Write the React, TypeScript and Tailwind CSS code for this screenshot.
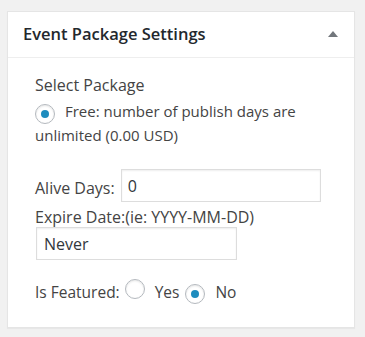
import React from "react";

const Radio = ({ checked }: { checked?: boolean }) => (
  <span className="inline-flex h-[20px] w-[20px] shrink-0 items-center justify-center rounded-full border border-[#b4b9be] bg-white shadow-[inset_0_1px_2px_rgba(0,0,0,0.1)]">
    {checked && <span className="h-[8px] w-[8px] rounded-full bg-[#1e8cbe]" />}
  </span>
);

export default function App() {
  return (
    <div
      className="min-h-[337px] w-[365px] bg-[#f1f1f1] pt-[11px] pl-[7px] text-[#444]"
      style={{ fontFamily: '"Open Sans", sans-serif' }}
    >
      <div className="w-[348px] border border-[#e5e5e5] bg-white shadow-[0_1px_1px_rgba(0,0,0,0.04)]">
        <div className="flex h-[46px] items-center justify-between border-b border-[#eee] pl-[15px] pr-[16px]">
          <h2 className="text-[16.5px] font-semibold text-[#23282d]">Event Package Settings</h2>
          <svg width="10" height="6" viewBox="0 0 10 6" className="mb-[1px]">
            <path d="M0 6 L5 0 L10 6 Z" fill="#72777c" />
          </svg>
        </div>
        <div className="px-[27px] pt-[16px] pb-[22px] text-[15px] leading-[23px]">
          <p className="text-[16px]">Select Package</p>
          <div className="mt-[3px] flex items-start">
            <span className="pt-[1px]"><Radio checked /></span>
            <span className="ml-[10px]">Free: number of publish days are</span>
          </div>
          <p>unlimited (0.00 USD)</p>
          <div className="mt-[22px] flex items-center">
            <span className="pt-[5px] text-[16px]">Alive Days:</span>
            <input
              readOnly
              value="0"
              className="ml-[6px] h-[33px] w-[200px] border border-[#ddd] px-[6px] text-[16px] text-[#32373c] shadow-[inset_0_1px_2px_rgba(0,0,0,0.07)] outline-none"
            />
          </div>
          <p className="mt-[5px] text-[16px] leading-[20px]">Expire Date:(ie: YYYY-MM-DD)</p>
          <input
            readOnly
            value="Never"
            className="ml-[1px] block h-[33px] w-[201px] border border-[#ddd] px-[7px] text-[16px] text-[#32373c] shadow-[inset_0_1px_2px_rgba(0,0,0,0.07)] outline-none"
          />
          <div className="mt-[19px] flex items-center">
            <span className="text-[15.5px]">Is Featured:</span>
            <span className="ml-[5px]"><Radio /></span>
            <span className="ml-[10px] text-[15.5px]">Yes</span>
            <span className="ml-[6px]"><Radio checked /></span>
            <span className="ml-[10px] text-[15.5px]">No</span>
          </div>
        </div>
      </div>
    </div>
  );
}
